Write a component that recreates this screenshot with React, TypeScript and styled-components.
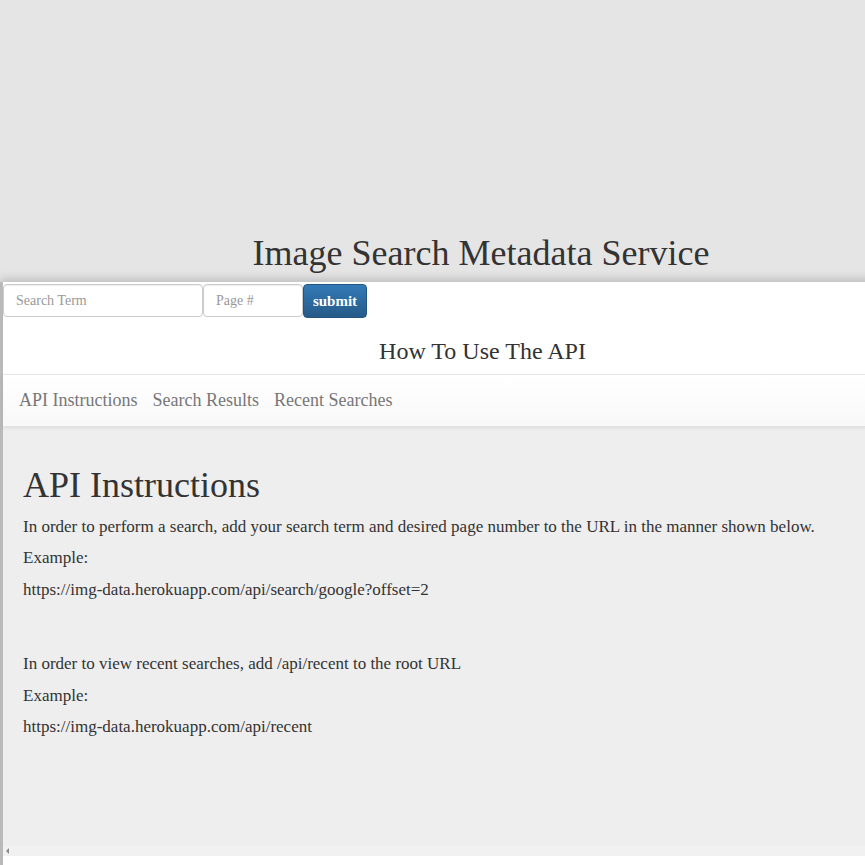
import React from "react";
import styled, { createGlobalStyle } from "styled-components";

const Global = createGlobalStyle`
  html, body { margin: 0; padding: 0; overflow: hidden; background: #e5e5e5; }
  body { font-family: "Liberation Serif", "Times New Roman", serif; color: #333; }
  * { box-sizing: border-box; }
`;

const Page = styled.div`
  width: 962px;
  height: 865px;
  display: flex;
  flex-direction: column;
`;

const Masthead = styled.header`
  height: 282px;
  display: flex;
  align-items: flex-end;
  justify-content: center;
  padding-bottom: 8px;
`;

const Title = styled.h1`
  margin: 0;
  font-size: 36px;
  font-weight: 400;
  line-height: 1.1;
  color: #333;
`;

const Panel = styled.main`
  flex: 1;
  display: flex;
  flex-direction: column;
  background: #fff;
  border-left: 3px solid #b9b9b9;
  box-shadow: 0 -3px 9px rgba(0, 0, 0, 0.18);
  position: relative;
`;

const SearchForm = styled.form`
  display: flex;
  padding-top: 2px;
  height: 36px;
`;

const Field = styled.input<{ $w: number }>`
  width: ${(p) => p.$w}px;
  height: 33px;
  border: 1px solid #ccc;
  border-radius: 4px;
  padding: 0 12px;
  font-family: "Liberation Serif", serif;
  font-size: 14px;
  color: #555;
  background: #fff;
  box-shadow: inset 0 1px 1px rgba(0, 0, 0, 0.075);
  &::placeholder { color: #999; }
`;

const Submit = styled.button`
  width: 64px;
  height: 34px;
  border: 1px solid #245580;
  border-radius: 4px;
  background: linear-gradient(to bottom, #337ab7 0, #265a88 100%);
  color: #fff;
  font-family: "Liberation Serif", serif;
  font-weight: 700;
  font-size: 15px;
  padding: 0;
`;

const SectionHeading = styled.h3`
  margin: 0;
  height: 56px;
  padding-top: 10px;
  display: flex;
  align-items: center;
  justify-content: center;
  font-size: 24px;
  font-weight: 400;
  color: #333;
`;

const NavBar = styled.nav`
  height: 52px;
  display: flex;
  align-items: center;
  gap: 15px;
  padding: 0 16px;
  border-top: 1px solid #e7e7e7;
  background: linear-gradient(to bottom, #fff 0, #f8f8f8 100%);
  box-shadow: 0 2px 4px rgba(0, 0, 0, 0.08);
  position: relative;
  z-index: 1;
`;

const NavLink = styled.a`
  font-size: 18px;
  color: #777;
  text-decoration: none;
`;

const Content = styled.section`
  flex: 1;
  background: #eee;
  padding: 40px 20px 0;
`;

const Heading = styled.h1`
  margin: 0 0 10px;
  font-size: 36px;
  font-weight: 400;
  line-height: 1.1;
  color: #333;
`;

const Para = styled.p<{ $gap?: number }>`
  margin: ${(p) => p.$gap ?? 0}px 0 10px;
  font-size: 17px;
  line-height: 21.5px;
  color: #333;
`;

const ScrollTrack = styled.div`
  height: 10px;
  background: #f1f1f1;
  position: relative;
  &::before {
    content: "";
    position: absolute;
    left: 3px;
    top: 2px;
    border-top: 3px solid transparent;
    border-bottom: 3px solid transparent;
    border-right: 3px solid #8a8a8a;
  }
`;

const Footer = styled.div`
  height: 9px;
  background: #fff;
`;

export default function App() {
  return (
    <>
      <Global />
      <Page>
        <Masthead>
          <Title>Image Search Metadata Service</Title>
        </Masthead>
        <Panel>
          <SearchForm onSubmit={(e) => e.preventDefault()}>
            <Field $w={200} placeholder="Search Term" />
            <Field $w={100} placeholder="Page #" />
            <Submit type="submit">submit</Submit>
          </SearchForm>
          <SectionHeading>How To Use The API</SectionHeading>
          <NavBar>
            <NavLink href="#">API Instructions</NavLink>
            <NavLink href="#">Search Results</NavLink>
            <NavLink href="#">Recent Searches</NavLink>
          </NavBar>
          <Content>
            <Heading>API Instructions</Heading>
            <Para>
              In order to perform a search, add your search term and desired page number to the URL in the manner shown below.
            </Para>
            <Para>Example:</Para>
            <Para>https://img-data.herokuapp.com/api/search/google?offset=2</Para>
            <Para $gap={53}>In order to view recent searches, add /api/recent to the root URL</Para>
            <Para>Example:</Para>
            <Para>https://img-data.herokuapp.com/api/recent</Para>
          </Content>
          <ScrollTrack />
          <Footer />
        </Panel>
      </Page>
    </>
  );
}
